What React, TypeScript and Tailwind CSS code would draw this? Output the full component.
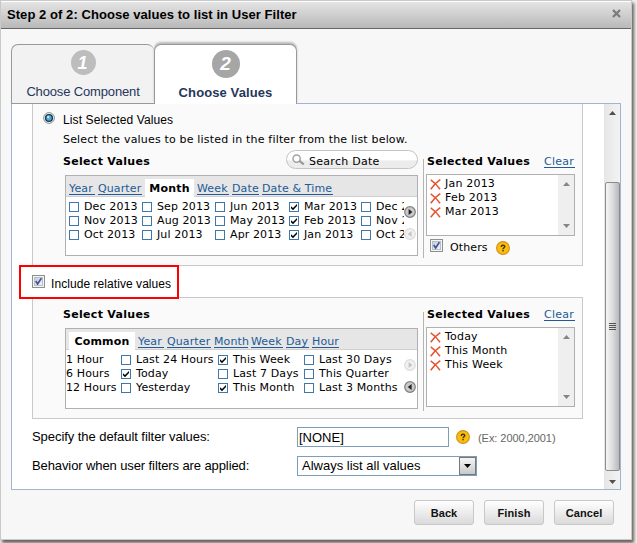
import React from "react";

type Option = { label: string; checked?: boolean; plain?: boolean };
type Column = { width: string; items: Option[] };
type Tab = { label: string; width: string; active?: boolean };

const dateTabs: Tab[] = [
  { label: "Year", width: "w-[26px]" },
  { label: "Quarter", width: "w-[44px]" },
  { label: "Month", width: "w-[49px]", active: true },
  { label: "Week", width: "w-[32px]" },
  { label: "Date", width: "w-[27px]" },
  { label: "Date & Time", width: "w-[71px]" },
];

const dateColumns: Column[] = [
  {
    width: "w-[73px]",
    items: [{ label: "Dec 2013" }, { label: "Nov 2013" }, { label: "Oct 2013" }],
  },
  {
    width: "w-[73px]",
    items: [{ label: "Sep 2013" }, { label: "Aug 2013" }, { label: "Jul 2013" }],
  },
  {
    width: "w-[74px]",
    items: [{ label: "Jun 2013" }, { label: "May 2013" }, { label: "Apr 2013" }],
  },
  {
    width: "w-[72px]",
    items: [
      { label: "Mar 2013", checked: true },
      { label: "Feb 2013", checked: true },
      { label: "Jan 2013", checked: true },
    ],
  },
  {
    width: "w-[73px]",
    items: [{ label: "Dec 2012" }, { label: "Nov 2012" }, { label: "Oct 2012" }],
  },
];

const relativeTabs: Tab[] = [
  { label: "Common", width: "w-[66px]", active: true },
  { label: "Year", width: "w-[26px]" },
  { label: "Quarter", width: "w-[44px]" },
  { label: "Month", width: "w-[34px]" },
  { label: "Week", width: "w-[32px]" },
  { label: "Day", width: "w-[23px]" },
  { label: "Hour", width: "w-[27px]" },
];

const relativeColumns: Column[] = [
  {
    width: "w-[55px]",
    items: [
      { label: "1 Hour", plain: true },
      { label: "6 Hours", plain: true },
      { label: "12 Hours", plain: true },
    ],
  },
  {
    width: "w-[97px]",
    items: [
      { label: "Last 24 Hours" },
      { label: "Today", checked: true },
      { label: "Yesterday" },
    ],
  },
  {
    width: "w-[86px]",
    items: [
      { label: "This Week", checked: true },
      { label: "Last 7 Days" },
      { label: "This Month", checked: true },
    ],
  },
  {
    width: "w-[100px]",
    items: [
      { label: "Last 30 Days" },
      { label: "This Quarter" },
      { label: "Last 3 Months" },
    ],
  },
];

function SmallCheck({ checked }: { checked?: boolean }) {
  return (
    <span className="flex h-[10px] w-[10px] shrink-0 items-center justify-center border border-[#3f78a8] bg-white">
      {checked && (
        <svg width="8" height="8" viewBox="0 0 8 8">
          <path d="M1 3.2v2l2 2 4-4.2V1L3 5z" fill="#000" />
        </svg>
      )}
    </span>
  );
}

function BigCheck() {
  return (
    <span className="flex h-[13px] w-[13px] shrink-0 items-center justify-center border border-[#8e8f8f] bg-[#f4f4f4] p-px">
      <span className="h-full w-full border border-[#b8bfc9] bg-linear-to-br from-[#c9ced6] to-[#f3f3f3]">
        <svg width="7" height="7" viewBox="0 0 7 7">
          <path d="M0.8 3l1.8 3L6.4 0.2" fill="none" stroke="#3d569c" strokeWidth="1.7" />
        </svg>
      </span>
    </span>
  );
}

function HelpIcon() {
  return (
    <svg width="14" height="14" viewBox="0 0 14 14" className="shrink-0">
      <circle cx="7" cy="7" r="6.4" fill="#f9bd0d" stroke="#d08f22" strokeWidth="1.1" />
      <path
        d="M5.2 5.9Q5.2 4.2 7 4.2T8.8 5.6Q8.8 6.4 7.9 6.8 7.1 7.2 7.1 8"
        fill="none"
        stroke="#4a3608"
        strokeWidth="1.4"
      />
      <rect x="6.3" y="8.8" width="1.5" height="1.5" fill="#4a3608" />
    </svg>
  );
}

function NavButton({ left, disabled }: { left?: boolean; disabled?: boolean }) {
  return (
    <svg width="12" height="12" viewBox="0 0 12 12">
      <circle
        cx="6"
        cy="6"
        r="5.3"
        fill={disabled ? "#f1f1f1" : "#c9c9c9"}
        stroke={disabled ? "#dcdcdc" : "#808080"}
        strokeWidth="1.2"
      />
      <path
        d={left ? "M7.6 3v6L3.8 6z" : "M4.6 3v6L8.4 6z"}
        fill={disabled ? "#c4c4c4" : "#222"}
      />
    </svg>
  );
}

function Arrow({ down, color = "#505050" }: { down?: boolean; color?: string }) {
  return (
    <svg width="7" height="4" viewBox="0 0 7 4">
      <path d={down ? "M0 0h7L3.5 4z" : "M0 4h7L3.5 0z"} fill={color} />
    </svg>
  );
}

function RemoveIcon() {
  return (
    <svg width="11" height="11" viewBox="0 0 11 11" className="shrink-0">
      <path d="M0.7 0.9Q6 4.5 10 10.2M10.3 0.6Q5 4 0.7 10.2" fill="none" stroke="#e5532f" strokeWidth="1.5" />
    </svg>
  );
}

function ValuePicker({
  tabs,
  columns,
  indent,
  atEnd,
  search,
}: {
  tabs: Tab[];
  columns: Column[];
  indent: string;
  atEnd?: boolean;
  search?: boolean;
}) {
  return (
    <div className="w-[355px]">
      <div className="flex h-[28px] justify-between">
        <h2 className="mt-[8px] font-bold tracking-[0.3px]">Select Values</h2>
        {search && (
          <div className="mt-[3px] flex h-[19px] w-[132px] rounded-full border border-[#c4c4c4] bg-linear-to-b from-white from-50% to-[#ececec] to-60% pl-[5px]">
            <svg width="13" height="12" viewBox="0 0 13 12" className="mt-[3px]">
              <circle cx="4.6" cy="4.6" r="3.6" fill="#fff" stroke="#a2a2a2" strokeWidth="1.5" />
              <path d="M7.4 6.8l4.4 3.6" stroke="#999" strokeWidth="2.2" />
            </svg>
            <span className="mt-[4px] ml-[4px] leading-[14px] tracking-[0.28px]">Search Date</span>
          </div>
        )}
      </div>
      <div className="ml-[2px] h-[81px] w-[353px] border border-[#b0b0b0] bg-white">
        <div className="flex h-[21px] gap-[3px] border-b border-[#cfcfcf] bg-[#e6e6e6] pl-[3px]">
          {tabs.map((tab) =>
            tab.active ? (
              <div
                key={tab.label}
                className={`${tab.width} mt-[3px] h-[18px] bg-white pt-[3px] text-center font-bold tracking-[0.2px]`}
              >
                {tab.label}
              </div>
            ) : (
              <a
                key={tab.label}
                className={`${tab.width} mt-[6px] h-[13px] border-b border-[#235a96] leading-[14px] whitespace-nowrap text-[#235a96]`}
              >
                {tab.label}
              </a>
            )
          )}
        </div>
        <div className="flex justify-between">
          <div className={`${indent} mt-[3px] flex flex-1 overflow-hidden`}>
            {columns.map((column, index) => (
              <div key={index} className={`${column.width} shrink-0`}>
                {column.items.map((item) => (
                  <div key={item.label} className="flex h-[14px] items-center whitespace-nowrap">
                    {!item.plain && <SmallCheck checked={item.checked} />}
                    <span className={item.plain ? "" : "ml-[5px]"}>{item.label}</span>
                  </div>
                ))}
              </div>
            ))}
          </div>
          <div className="mt-[9px] flex w-[13px] flex-col gap-[10px]">
            <NavButton disabled={atEnd} />
            <NavButton left disabled={!atEnd} />
          </div>
        </div>
      </div>
    </div>
  );
}

function SelectedValues({
  values,
  height,
  others,
}: {
  values: string[];
  height: string;
  others?: boolean;
}) {
  return (
    <div className="mt-[12px] ml-[5px] h-[99px] w-[152px] border-l border-[#b4b4b4] pl-[2px]">
      <div className="flex h-[15px] justify-between pl-px">
        <h2 className="-mt-[4px] font-bold whitespace-nowrap tracking-[0.3px]">Selected Values</h2>
        <a className="-mt-[4px] h-[13px] w-[31px] border-b border-[#235a96] leading-[14px] tracking-[0.25px] text-[#235a96]">
          Clear
        </a>
      </div>
      <div className={`${height} flex w-[149px] justify-between border border-[#b0b0b0] bg-white`}>
        <ul className="pt-[2px] pl-[3px]">
          {values.map((value) => (
            <li key={value} className="flex h-[14px] items-center gap-[4px] tracking-[0.2px]">
              <RemoveIcon />
              {value}
            </li>
          ))}
        </ul>
        <div className="flex w-[16px] flex-col items-center justify-between bg-[#efefef] py-[7px]">
          <Arrow color="#858585" />
          <Arrow down color="#858585" />
        </div>
      </div>
      {others && (
        <div className="mt-[3px] flex items-start pl-[4px]">
          <BigCheck />
          <span className="mt-[2px] ml-[7px] w-[46px]">Others</span>
          <span className="mt-[2px]">
            <HelpIcon />
          </span>
        </div>
      )}
    </div>
  );
}

function FooterButton({ label }: { label: string }) {
  return (
    <button className="h-[25px] w-[60px] rounded-[3px] border border-[#c8c8c8] bg-linear-to-b from-white to-[#dadada] text-[11px] font-bold tracking-[0.1px] text-[#111]">
      {label}
    </button>
  );
}

export default function App() {
  return (
    <div className="h-[543px] w-[637px] overflow-hidden bg-[#efefef] font-['Liberation_Sans',sans-serif] text-[12px] leading-[14px] text-black">
      <div className="flex h-[540px] w-[632px] flex-col border border-[#c9c9c9] bg-[#f7f7f7] shadow-[2px_3px_3px_0px_#66615c]">
        <header className="flex h-[28px] items-start justify-between border-t border-b border-t-white border-b-[#666] bg-linear-to-b from-[#e4e4e4] to-[#b9b9b9] pr-[10px] pl-[6px]">
          <h1 className="mt-[6px] text-[13px] font-bold whitespace-nowrap tracking-[0.06px]">
            Step 2 of 2: Choose values to list in User Filter
          </h1>
          <svg width="9" height="9" viewBox="0 0 9 9" className="mt-[7px]">
            <path d="M1 1l7 7M8 1L1 8" stroke="#7c7c7c" strokeWidth="2.4" />
          </svg>
        </header>

        <nav className="flex h-[75px] pt-[15px] pl-[10px]">
          <div className="flex h-[60px] w-[143px] flex-col items-center rounded-t-[7px] border border-r-0 border-[#999] bg-[#f2f2f2]">
            <span className="mt-[5px] flex h-[25px] w-[25px] items-center justify-center rounded-full bg-[#bdbdbd] pr-px text-[18px] font-bold text-white italic">
              1
            </span>
            <span className="mt-[10px] text-[13px] whitespace-nowrap tracking-[-0.15px] text-[#26365c]">
              Choose Component
            </span>
          </div>
          <div className="z-10 flex h-[60px] w-[143px] flex-col items-center rounded-t-[7px] border border-b-0 border-[#999] bg-white shadow-[0_-2px_2px_#bbb]">
            <span className="mt-[5px] flex h-[28px] w-[28px] items-center justify-center rounded-full bg-[#a6a6a6] text-[19px] font-bold text-white italic">
              2
            </span>
            <span className="mt-[8px] text-[13px] font-bold whitespace-nowrap tracking-[0.1px] text-[#26365c]">
              Choose Values
            </span>
          </div>
          <div className="mr-[10px] flex-1 border-b border-[#a0b4d4]" />
        </nav>

        <main className="ml-[10px] flex h-[386px] w-[610px] shrink-0 border border-t-0 border-[#a0b4d4] bg-white">
          <div className="w-[592px] pl-[20px]">
            <section className="h-[162px] w-[551px] border border-t-0 border-[#c9c9c9] bg-[#fafafa] pt-[9px]">
              <label className="flex h-[14px] pl-[10px]">
                <svg width="12" height="12" viewBox="0 0 12 12" className="-mt-px">
                  <circle cx="6" cy="6" r="5.4" fill="#f3f3f3" stroke="#8e8f8f" />
                  <circle cx="6" cy="6" r="3.4" fill="#4fa9d0" stroke="#173b58" strokeWidth="1.4" />
                  <circle cx="5.2" cy="5" r="1.2" fill="#b9e8f8" />
                </svg>
                <span className="ml-[8px] tracking-[0.12px]">List Selected Values</span>
              </label>
              <div className="pl-[30px] font-['DejaVu_Sans',sans-serif] text-[11px] leading-[14px] tracking-[0.12px]">
                <p className="mt-[6px] h-[14px] tracking-[0.18px]">
                  Select the values to be listed in the filter from the list below.
                </p>
                <div className="flex">
                  <ValuePicker tabs={dateTabs} columns={dateColumns} indent="pl-[3px]" search />
                  <SelectedValues
                    values={["Jan 2013", "Feb 2013", "Mar 2013"]}
                    height="h-[62px]"
                    others
                  />
                </div>
              </div>
            </section>

            <label className="relative z-10 -mt-px -ml-[13px] flex h-[34px] w-[160px] border-2 border-[#ff0000] bg-white pt-[8px] pl-[11px]">
              <BigCheck />
              <span className="mt-[2px] ml-[6px] whitespace-nowrap tracking-[0.06px]">
                Include relative values
              </span>
            </label>

            <section className="-mt-[2px] h-[122px] w-[551px] border border-[#c9c9c9] bg-[#fafafa] pt-[2px] pl-[30px] font-['DejaVu_Sans',sans-serif] text-[11px] leading-[14px] tracking-[0.12px]">
              <div className="flex">
                <ValuePicker tabs={relativeTabs} columns={relativeColumns} indent="pl-0" atEnd />
                <SelectedValues values={["Today", "This Month", "This Week"]} height="h-[80px]" />
              </div>
            </section>

            <div className="mt-[8px] flex h-[20px] items-center text-[13px]">
              <span className="w-[265px] tracking-[-0.06px]">Specify the default filter values:</span>
              <input
                className="h-[20px] w-[152px] border border-[#7b9ebd] bg-white pl-px"
                defaultValue="[NONE]"
              />
              <span className="ml-[7px]">
                <HelpIcon />
              </span>
              <span className="mt-[2px] ml-[8px] text-[11px] tracking-[-0.05px] text-[#666]">
                (Ex: 2000,2001)
              </span>
            </div>
            <div className="mt-[9px] flex h-[20px] items-center text-[13px]">
              <span className="w-[265px] tracking-[-0.1px]">Behavior when user filters are applied:</span>
              <div className="flex h-[20px] w-[180px] items-center justify-between border border-[#7b9ebd] bg-white pl-[4px]">
                Always list all values
                <span className="flex h-[18px] w-[17px] items-center justify-center border border-[#777] bg-linear-to-b from-[#f5f5f5] to-[#c9c9c9]">
                  <Arrow down color="#000" />
                </span>
              </div>
            </div>
          </div>

          <div className="flex w-[16px] flex-col items-center bg-linear-to-r from-[#e6e6e6] to-[#f3f3f3] pt-[7px]">
            <Arrow />
            <div className="mt-[67px] flex h-[289px] w-[15px] items-center justify-center rounded-[2px] border border-[#8c8c8c] bg-linear-to-r from-[#f6f6f6] via-[#dcdcde] to-[#b7b7bd]">
              <span className="flex flex-col gap-px">
                <span className="h-px w-[7px] bg-[#555]" />
                <span className="h-px w-[7px] bg-[#555]" />
                <span className="h-px w-[7px] bg-[#555]" />
                <span className="h-px w-[7px] bg-[#555]" />
              </span>
            </div>
            <span className="mt-[9px] flex">
              <Arrow down />
            </span>
          </div>
        </main>

        <footer className="flex justify-end gap-[10px] pt-[10px] pr-[17px]">
          <FooterButton label="Back" />
          <FooterButton label="Finish" />
          <FooterButton label="Cancel" />
        </footer>
      </div>
    </div>
  );
}
